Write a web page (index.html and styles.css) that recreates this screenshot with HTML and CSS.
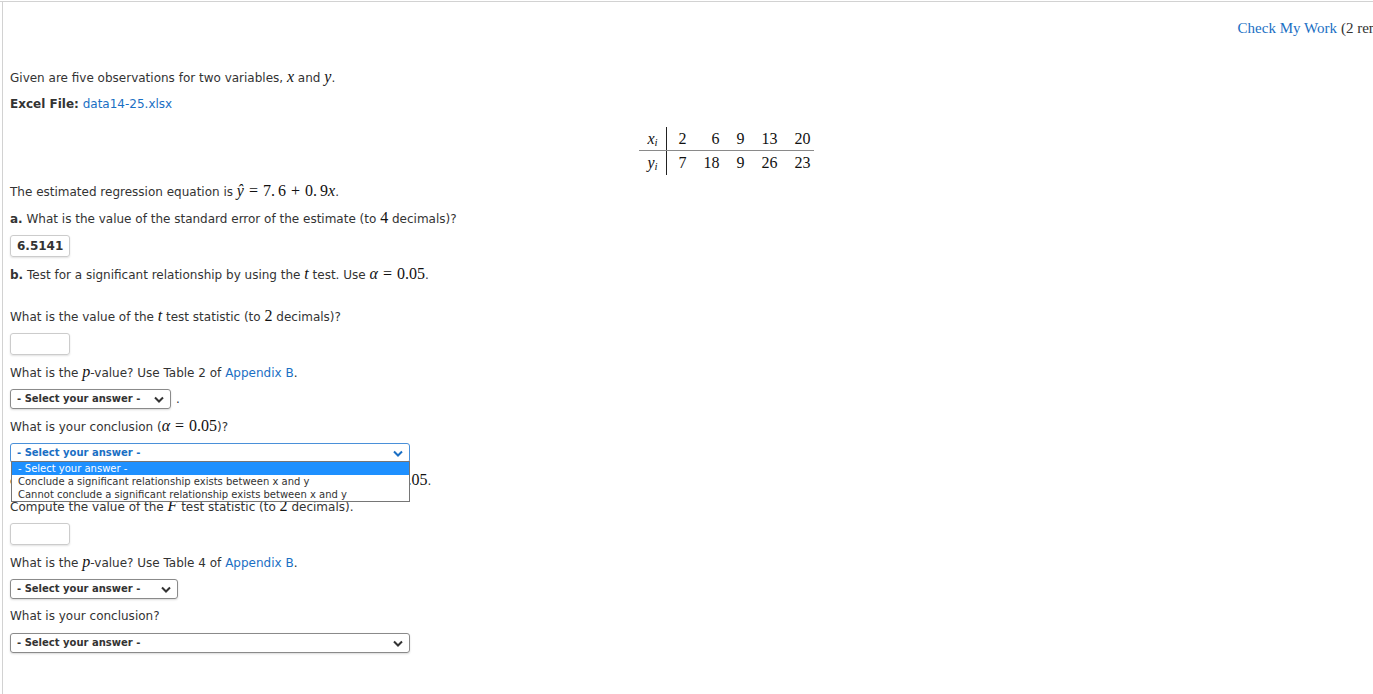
FILE: index.html
```html
<!DOCTYPE html>
<html lang="en">
<head>
    <meta charset="UTF-8">
    <title>Regression Problem</title>
    <link rel="stylesheet" href="styles.css">
</head>
<body>
    <div class="top-rule"></div>
    <div class="page">
        <div class="check-row">
            <a class="check-link" href="#">Check My Work</a><span class="check-note">(2 remaining)</span>
        </div>

        <div class="question">
            <p class="line">Given are five observations for two variables, <i class="m">x</i> and <i class="m">y</i>.</p>
            <p class="line"><b>Excel File:</b> <a href="#">data14-25.xlsx</a></p>

            <!-- data table -->
            <div class="table-wrap">
                <table class="data-table">
                    <tr class="row-x">
                        <td class="lbl"><i>x</i><sub><i>i</i></sub></td>
                        <td class="first">2</td><td>6</td><td>9</td><td>13</td><td>20</td>
                    </tr>
                    <tr>
                        <td class="lbl"><i>y</i><sub><i>i</i></sub></td>
                        <td class="first">7</td><td>18</td><td>9</td><td>26</td><td>23</td>
                    </tr>
                </table>
            </div>

            <p class="line">The estimated regression equation is <span class="m"><i>ŷ</i><span class="op">=</span>7<span class="pt">.</span>6<span class="op">+</span>0<span class="pt">.</span>9<i>x</i></span>.</p>
            <p class="line"><b>a.</b> What is the value of the standard error of the estimate (to <span class="m">4</span> decimals)?</p>
            <div class="answer filled">6.5141</div>
            <p class="line"><b>b.</b> Test for a significant relationship by using the <i class="m">t</i> test. Use <span class="m"><i>α</i><span class="op">=</span>0.05</span>.</p>

            <p class="line spaced">What is the value of the <i class="m">t</i> test statistic (to <span class="m">2</span> decimals)?</p>
            <div class="answer"></div>
            <p class="line">What is the <i class="m">p</i>-value? Use Table 2 of <a href="#">Appendix B</a>.</p>
            <div class="select-row">
                <div class="select short">- Select your answer - <svg class="chev" width="10" height="7" viewBox="0 0 10 7"><path d="M1 1.5 L5 5.5 L9 1.5" fill="none" stroke="#333" stroke-width="2"/></svg></div>
                <span class="dot">.</span>
            </div>
            <p class="line">What is your conclusion (<span class="m"><i>α</i><span class="op">=</span>0.05</span>)?</p>

            <!-- open dropdown -->
            <div class="select-open">
                <div class="select wide open">- Select your answer - <svg class="chev" width="10" height="7" viewBox="0 0 10 7"><path d="M1 1.5 L5 5.5 L9 1.5" fill="none" stroke="#1a6fc4" stroke-width="2"/></svg></div>
                <ul class="options">
                    <li class="active">- Select your answer -</li>
                    <li>Conclude a significant relationship exists between x and y</li>
                    <li>Cannot conclude a significant relationship exists between x and y</li>
                </ul>
            </div>
            <p class="line wide-words"><b>c.</b> Use the <i class="m">F</i> test to test for a significant relationship. Use <span class="m"><i>α</i><span class="op">=</span>0.05</span>.</p>

            <p class="line pull-up">Compute the value of the <i class="m">F</i> test statistic (to <span class="m">2</span> decimals).</p>
            <div class="answer"></div>
            <p class="line">What is the <i class="m">p</i>-value? Use Table 4 of <a href="#">Appendix B</a>.</p>
            <div class="select mid">- Select your answer - <svg class="chev" width="10" height="7" viewBox="0 0 10 7"><path d="M1 1.5 L5 5.5 L9 1.5" fill="none" stroke="#333" stroke-width="2"/></svg></div>
            <p class="line">What is your conclusion?</p>
            <div class="select wide">- Select your answer - <svg class="chev" width="10" height="7" viewBox="0 0 10 7"><path d="M1 1.5 L5 5.5 L9 1.5" fill="none" stroke="#333" stroke-width="2"/></svg></div>
        </div>
    </div>
</body>
</html>
```

FILE: styles.css
```css
html, body {
    margin: 0;
    padding: 0;
    overflow: hidden;
    background-color: #ffffff;
}

body {
    font-family: "DejaVu Sans", Verdana, sans-serif;
    font-size: 12px;
    color: #333333;
    height: 694px;
}

a {
    color: #1a6fc4;
    text-decoration: none;
}

.top-rule {
    height: 1px;
    margin-top: 1px;
    background-color: #d2d2d2;
}

.page {
    margin-left: 2px;
    border-left: 1px solid #d2d2d2;
    height: 692px;
    padding-left: 7px;
}

/* check my work */
.check-row {
    display: flex;
    justify-content: flex-end;
    height: 50px;
    padding-top: 18px;
    box-sizing: border-box;
    margin-right: -50px;
    font-family: "Liberation Serif", Georgia, serif;
    font-size: 15px;
    white-space: nowrap;
}

.check-link {
    color: #1a6fc4;
}

.check-note {
    margin-left: 4px;
    color: #333333;
}

.question {
    display: flex;
    flex-direction: column;
    align-items: flex-start;
    gap: 7px;
    padding-top: 15px;
}

.line {
    margin: 0;
    line-height: 20px;
    height: 20px;
    white-space: nowrap;
}

.line b {
    color: #333333;
}

.spaced {
    margin-top: 15px;
}

.pull-up {
    margin-top: -1px;
}

.wide-words {
    word-spacing: 1px;
}

.m {
    font-family: "Liberation Serif", "Times New Roman", serif;
    font-size: 16px;
    color: #111111;
}

.m i, i.m {
    font-style: italic;
}

.op {
    margin: 0 5px;
}

.pt {
    margin-right: 3px;
}

/* table */
.table-wrap {
    align-self: stretch;
    display: flex;
    justify-content: center;
    padding-left: 70px;
    margin: 6px 0 -1px;
}

.data-table {
    border-collapse: collapse;
    font-family: "Liberation Serif", "Times New Roman", serif;
    font-size: 16px;
    color: #111111;
}

.data-table td {
    height: 24px;
    padding: 0 3px 0 14px;
    text-align: right;
    line-height: 24px;
}

.row-x td {
    height: 23px;
    line-height: 23px;
    border-bottom: 1px solid #8a8a8a;
}

.data-table td.first {
    padding-left: 12px;
}

.data-table td.lbl {
    border-right: 1px solid #222222;
    padding: 0 8px;
    text-align: left;
}

.data-table sub {
    font-size: 11px;
    line-height: 0;
    vertical-align: -2px;
}

/* answer inputs */
.answer {
    width: 52px;
    height: 20px;
    padding-left: 6px;
    border: 1px solid #cccccc;
    border-radius: 3px;
    box-shadow: 0 1px 2px rgba(0, 0, 0, 0.12);
    font-weight: bold;
    font-size: 12px;
    line-height: 20px;
}

/* selects */
.select-row {
    display: flex;
    align-items: center;
    gap: 5px;
}

.dot {
    font-size: 12px;
}

.select {
    height: 18px;
    border: 1px solid #8a8a8a;
    border-radius: 3px;
    box-shadow: 0 1px 2px rgba(0, 0, 0, 0.15);
    font-size: 10px;
    font-weight: bold;
    line-height: 18px;
    padding: 0 6px;
    display: flex;
    align-items: center;
    justify-content: space-between;
    color: #333333;
    white-space: nowrap;
}

.select.short {
    width: 147px;
}

.select.mid {
    width: 154px;
}

.select.wide {
    width: 386px;
}

.select.open {
    border-color: #4a90d9;
    color: #1a6fc4;
    box-shadow: none;
}

.select-open {
    position: relative;
}

.options {
    position: absolute;
    top: 18px;
    left: 1px;
    width: 397px;
    margin: 0;
    padding: 0;
    list-style: none;
    background-color: #ffffff;
    border: 1px solid #767676;
    z-index: 2;
    font-size: 10px;
    color: #333333;
}

.options li {
    height: 13px;
    line-height: 13px;
    padding-left: 6px;
    white-space: nowrap;
}

.options li.active {
    background-color: #1e90ff;
    color: #ffffff;
}
```
